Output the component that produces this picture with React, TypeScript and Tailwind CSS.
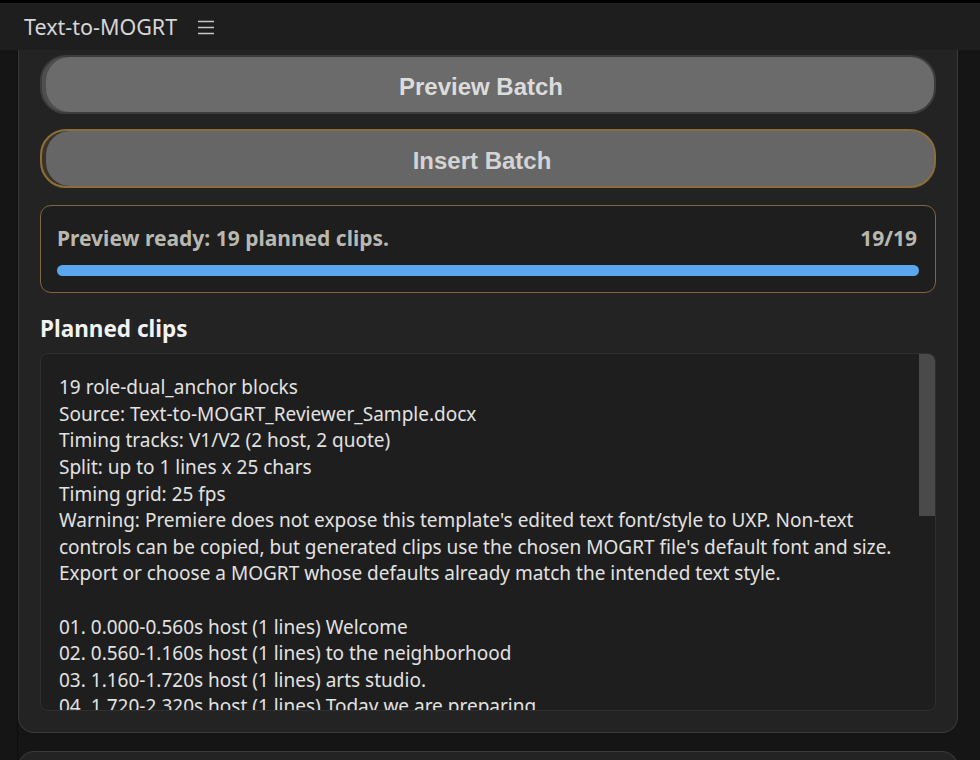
const lines = [
  "19 role-dual_anchor blocks",
  "Source: Text-to-MOGRT_Reviewer_Sample.docx",
  "Timing tracks: V1/V2 (2 host, 2 quote)",
  "Split: up to 1 lines x 25 chars",
  "Timing grid: 25 fps",
  "Warning: Premiere does not expose this template's edited text font/style to UXP. Non-text",
  "controls can be copied, but generated clips use the chosen MOGRT file's default font and size.",
  "Export or choose a MOGRT whose defaults already match the intended text style.",
  "",
  "01. 0.000-0.560s host (1 lines) Welcome",
  "02. 0.560-1.160s host (1 lines) to the neighborhood",
  "03. 1.160-1.720s host (1 lines) arts studio.",
  "04. 1.720-2.320s host (1 lines) Today we are preparing",
];

export default function App() {
  return (
    <div className="h-[760px] w-[980px] overflow-hidden bg-[#151515] font-['Noto_Sans',sans-serif]">
      {/* header */}
      <header className="flex h-[50px] items-center gap-[20px] border-t-[3px] border-black bg-[#1e1e1e] pl-[24px]">
        <span className="pt-[1px] text-[21.5px] text-[#d6d6d6]">Text-to-MOGRT</span>
        <svg className="h-[18px] w-[18px] text-[#c8c8c8]" viewBox="0 0 18 18" fill="none" stroke="currentColor" strokeWidth={1.6}>
          <path d="M1 3.5h16M1 9.5h16M1 15.5h16" />
        </svg>
      </header>

      <div className="flex">
        <div className="w-[18px] shrink-0 border-r border-[#0e0e0e]" />

        <div className="w-[940px] shrink-0">
          {/* main panel */}
          <section className="flex h-[683px] flex-col rounded-b-[16px] border border-t-0 border-[#393939] bg-[#232323] px-[21px] pb-[21px]">
            <button className="mt-[5px] h-[59px] w-full rounded-[26px] border-2 border-[#3c3c3c] bg-[#6b6b6b] pt-[5px] pr-[14px] font-['Liberation_Sans',Arial,sans-serif] text-[24px] font-bold text-[#dcdcdc] shadow-[inset_4px_0_0_#4e4e4e]">
              Preview Batch
            </button>
            <button className="mt-[15px] h-[59px] w-full rounded-[26px] border-2 border-[#8a6d38] bg-[#666666] pt-[5px] pr-[12px] font-['Liberation_Sans',Arial,sans-serif] text-[24px] font-bold text-[#d4d4d4] shadow-[inset_4px_0_0_#3a3326]">
              Insert Batch
            </button>

            <div className="mt-[17px] rounded-[11px] border border-[#7c6740] bg-[#1e1e1e] px-[16px] pt-[17px] pb-[16px]">
              <div className="flex items-center justify-between">
                <span className="text-[21px] font-bold text-[#b9b8b0]">Preview ready: 19 planned clips.</span>
                <span className="pr-[2px] text-[21px] font-bold text-[#b9b8b0]">19/19</span>
              </div>
              <div className="mt-[10px] h-[11px] rounded-full bg-[#5ba6ee]" />
            </div>

            <h2 className="mt-[19px] text-[22.5px] font-bold text-[#f2f2f2]">Planned clips</h2>

            <div className="mt-[8px] flex min-h-0 flex-1 overflow-hidden rounded-[8px] border border-[#2f2f2f] bg-[#1e1e1e]">
              <div className="flex-1 overflow-hidden pl-[18px] pt-[20px] text-[19px] leading-[26.6px] text-[#e2e2e2]">
                {lines.map((l, i) => (
                  <div key={i} className="h-[26.6px] whitespace-nowrap">
                    {l}
                  </div>
                ))}
              </div>
              <div className="w-[16px] shrink-0">
                <div className="h-[162px] bg-[#4a4a4a]" />
              </div>
            </div>
          </section>

          {/* next panel */}
          <section className="mt-[18px] h-[40px] rounded-t-[16px] border border-b-0 border-[#393939] bg-[#232323]" />
        </div>

        <div className="w-[22px] shrink-0" />
      </div>
    </div>
  );
}
